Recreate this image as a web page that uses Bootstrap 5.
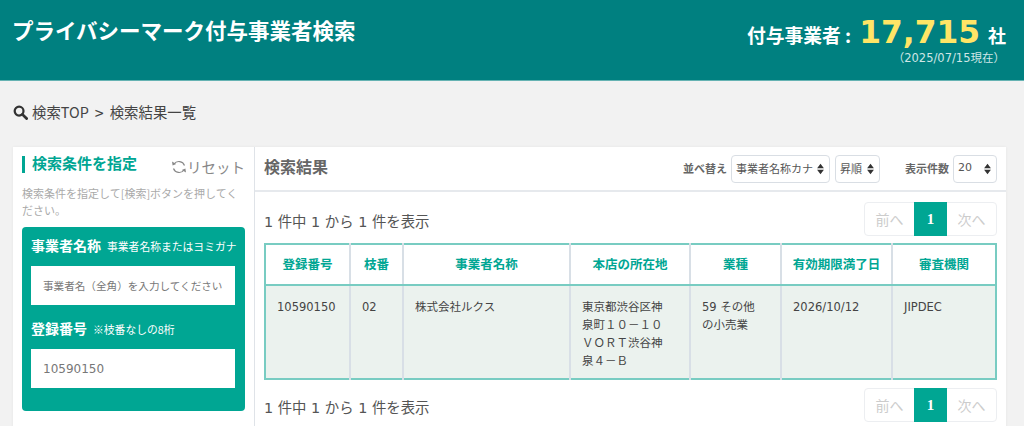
<!DOCTYPE html>
<html lang="ja">
<head>
<meta charset="utf-8">
<title>プライバシーマーク付与事業者検索</title>
<link href="https://cdn.jsdelivr.net/npm/bootstrap@5.3.0/dist/css/bootstrap.min.css" rel="stylesheet">
<style>
html,body{height:426px;overflow:hidden}
body{background:#f2f2f2;font-family:"DejaVu Sans","Noto Sans CJK JP",sans-serif;font-size:12px;color:#555}
.site-head{background:#008080;height:81px;border-bottom:1px solid #66b3b3;color:#fff;padding:0 18px 0 12px}
.site-title{font-size:21.5px;font-weight:700;line-height:1;margin:19px 0 0;font-family:"Noto Sans CJK JP",sans-serif}
.count-box{margin-top:13px;text-align:right}
.count-line{display:flex;align-items:baseline;justify-content:flex-end;font-weight:700;line-height:38px;font-family:"Noto Sans CJK JP",sans-serif}
.count-label{font-size:18.8px}
.count-num{font-size:31.3px;color:#ffe566;font-family:"DejaVu Sans",sans-serif;font-weight:700;margin:0 8px}
.count-unit{font-size:18px}
.count-date{font-size:11.5px;color:#cfe6e6;line-height:12px;margin:-2px 1px 0 0;font-family:"DejaVu Sans","Noto Sans CJK JP",sans-serif}
.crumbs{height:66px;padding:0 13px 4px;font-size:14.4px;color:#444;font-family:"Noto Sans CJK JP",sans-serif;gap:3px}
.crumbs svg{margin-right:1px}
.crumb-sep{margin:0 3px;font-size:16px;line-height:1}
.panels{margin-left:13px;width:993px;height:300px;background:#fff;box-shadow:0 0 3px rgba(0,0,0,.06)}
.cond-panel{width:242px;flex:none;padding:9px 9px 0;border-right:1px solid #dfe3e8;font-family:"Noto Sans CJK JP",sans-serif}
.cond-title{font-size:15px;font-weight:700;color:#00a693;border-left:3px solid #00a693;line-height:13px;padding:0 0 4px 7px}
.reset-link{font-size:14.5px;color:#888;line-height:17px;margin-top:2px}
.help-text{font-size:11px;line-height:17px;color:#aaa;margin:10px 0 8px}
.cond-box{background:#00a693;border-radius:4px;padding:9px 10px 23px 9px;color:#fff}
.cond-label{font-size:14px;font-weight:700;line-height:18px;margin-bottom:11px;white-space:nowrap}
.cond-sub{font-size:10.8px;font-weight:400;margin-left:6px}
.cond-input{border-radius:0;border:0;height:39px;font-size:12px;padding:0 12px;color:#777;font-family:"DejaVu Sans","Noto Sans CJK JP",sans-serif}
.cond-input::placeholder{color:#777;font-family:"Noto Sans CJK JP",sans-serif;font-size:10.6px;opacity:1}
.cond-gap{margin-top:14px;margin-bottom:11px}
.res-panel{flex:1;min-width:0}
.res-head{height:45px;border-bottom:2px solid #e6e9ed;padding:0 9px}
.res-title{font-size:16px;font-weight:700;color:#666;font-family:"Noto Sans CJK JP",sans-serif;margin:-4px 0 0}
.sort-label{font-size:11px;font-weight:700;color:#666;font-family:"Noto Sans CJK JP",sans-serif;margin-right:4px}
.sort-select{height:28px;font-size:11px;padding:0 14px 0 4px;color:#555;border-color:#d9dee4;background-image:url("data:image/svg+xml,%3csvg xmlns='http://www.w3.org/2000/svg' viewBox='0 0 10 14'%3e%3cpath fill='%23333' d='M5 1l4 5H1zM5 13L1 8h8z'/%3e%3c/svg%3e");background-size:9px 12px;background-position:right 4px center;font-family:"Noto Sans CJK JP",sans-serif;border-radius:4px}
.sort-select.sel-a{width:99px;margin-right:5px}
.sort-select.sel-b{width:45px;margin-right:25px}
.sort-select.sel-c{width:44px;font-family:"DejaVu Sans",sans-serif}
.res-body{padding:10px 9px 0}
.count-row{height:35px;font-size:14.4px;color:#555}
.count-row span{padding-top:10px}
.pagination{--bs-pagination-border-color:#eceef1;--bs-pagination-disabled-border-color:#eceef1;--bs-pagination-disabled-color:#ccc;--bs-pagination-disabled-bg:#fff;--bs-pagination-active-bg:#00a693;--bs-pagination-active-border-color:#00a693;--bs-pagination-border-radius:4px;margin:0}
.page-link{font-size:14px;height:34px;line-height:32px;width:51px;padding:0;text-align:center;font-family:"Noto Sans CJK JP",sans-serif}
.page-link.page-num{font-family:"Liberation Serif",serif;font-weight:700;font-size:15px;width:33px}
.res-table{margin:6px 0 8px;border:2px solid #78ccc2;table-layout:fixed;width:100%;font-size:11.5px;--bs-table-bg:transparent}
.res-table>:not(caption)>*>*{border:0;border-right:2px solid #d8dfe6;padding:0}
.res-table th:last-child,.res-table td:last-child{border-right:0}
.res-table th{height:41px;text-align:center;vertical-align:middle;font-size:12.5px;font-weight:700;color:#00a693;font-family:"Noto Sans CJK JP",sans-serif;background:#fff;border-bottom:2px solid #78ccc2}
.res-table>tbody>tr>td{height:92px;background:#ebf2ee;padding:12px 20px 8px 11px;vertical-align:top;color:#444;line-height:18px;font-family:"DejaVu Sans","Noto Sans CJK JP",sans-serif}
.col-a{width:85px}.col-b{width:53px}.col-c{width:167px}.col-d{width:120px}.col-e{width:91px}.col-f{width:111px}
</style>
</head>
<body>
<header class="site-head d-flex justify-content-between">
  <h1 class="site-title">プライバシーマーク付与事業者検索</h1>
  <div class="count-box">
    <div class="count-line"><span class="count-label">付与事業者 :</span><span class="count-num">17,715</span><span class="count-unit">社</span></div>
    <div class="count-date">（2025/07/15現在）</div>
  </div>
</header>
<nav class="crumbs d-flex align-items-center">
  <svg width="15" height="15" viewBox="0 0 16 16" aria-hidden="true"><circle cx="6.5" cy="6.5" r="4.7" fill="none" stroke="#333" stroke-width="2.4"/><path d="M10 10l4.5 4.5" stroke="#333" stroke-width="3" stroke-linecap="round"/></svg>
  <span>検索TOP</span><span class="crumb-sep">&gt;</span><span>検索結果一覧</span>
</nav>
<main class="panels d-flex">
  <aside class="cond-panel">
    <div class="d-flex justify-content-between align-items-start">
      <div class="cond-title">検索条件を指定</div>
      <div class="reset-link d-flex align-items-center">
        <svg width="16" height="14" viewBox="0 0 16 14" aria-hidden="true"><path d="M13.5 5.5A6 6 0 0 0 3 4M2.5 8.5A6 6 0 0 0 13 10" fill="none" stroke="#888" stroke-width="1.2"/><path d="M1 1.5l.6 4 3.6-1.4zM15 12.5l-.6-4-3.6 1.4z" fill="#888"/></svg>
        <span>リセット</span>
      </div>
    </div>
    <p class="help-text">検索条件を指定して[検索]ボタンを押してください。</p>
    <div class="cond-box">
      <div class="cond-label">事業者名称<span class="cond-sub">事業者名称またはヨミガナ</span></div>
      <input class="form-control cond-input" type="text" placeholder="事業者名（全角）を入力してください">
      <div class="cond-label cond-gap">登録番号<span class="cond-sub">※枝番なしの8桁</span></div>
      <input class="form-control cond-input" type="text" value="10590150">
    </div>
  </aside>
  <section class="res-panel">
    <div class="res-head d-flex align-items-center justify-content-between">
      <h2 class="res-title">検索結果</h2>
      <div class="d-flex align-items-center">
        <span class="sort-label">並べ替え</span>
        <select class="form-select sort-select sel-a"><option>事業者名称カナ</option></select>
        <select class="form-select sort-select sel-b"><option>昇順</option></select>
        <span class="sort-label">表示件数</span>
        <select class="form-select sort-select sel-c"><option>20</option></select>
      </div>
    </div>
    <div class="res-body">
      <div class="count-row d-flex justify-content-between">
        <span>1 件中 1 から 1 件を表示</span>
        <ul class="pagination">
          <li class="page-item disabled"><a class="page-link" href="#">前へ</a></li>
          <li class="page-item active"><a class="page-link page-num" href="#">1</a></li>
          <li class="page-item disabled"><a class="page-link" href="#">次へ</a></li>
        </ul>
      </div>
      <table class="table res-table">
        <colgroup><col class="col-a"><col class="col-b"><col class="col-c"><col class="col-d"><col class="col-e"><col class="col-f"><col></colgroup>
        <thead><tr><th>登録番号</th><th>枝番</th><th>事業者名称</th><th>本店の所在地</th><th>業種</th><th>有効期限満了日</th><th>審査機関</th></tr></thead>
        <tbody><tr><td>10590150</td><td>02</td><td>株式会社ルクス</td><td>東京都渋谷区神泉町１０－１０ＶＯＲＴ渋谷神泉４－Ｂ</td><td>59 その他の小売業</td><td>2026/10/12</td><td>JIPDEC</td></tr></tbody>
      </table>
      <div class="count-row d-flex justify-content-between">
        <span>1 件中 1 から 1 件を表示</span>
        <ul class="pagination">
          <li class="page-item disabled"><a class="page-link" href="#">前へ</a></li>
          <li class="page-item active"><a class="page-link page-num" href="#">1</a></li>
          <li class="page-item disabled"><a class="page-link" href="#">次へ</a></li>
        </ul>
      </div>
    </div>
  </section>
</main>
<script src="https://cdn.jsdelivr.net/npm/bootstrap@5.3.0/dist/js/bootstrap.bundle.min.js"></script>
</body>
</html>
